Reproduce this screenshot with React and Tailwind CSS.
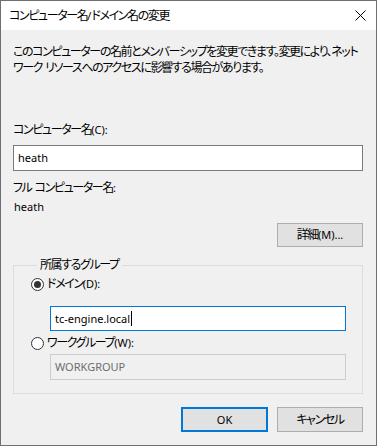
import React from "react";

const font = "font-['Noto_Sans','Noto_Sans_CJK_JP',sans-serif] [font-feature-settings:'palt']";
const en = "text-[11px]";

function J({ children }) {
  return <span className="tracking-[-1.4px]">{children}</span>;
}
function E({ children }) {
  return <span className="text-[11px] tracking-normal">{children}</span>;
}
function Sp() {
  return <span className="tracking-normal">{"\u00a0"}</span>;
}

function Radio({ checked }) {
  return (
    <span className="w-[13px] h-[13px] rounded-full border border-[#333333] bg-white flex items-center justify-center shrink-0">
      {checked && <span className="w-[7px] h-[7px] rounded-full bg-[#333333]" />}
    </span>
  );
}

export default function App() {
  return (
    <div className={`${font} w-[377px] h-[446px] border border-[#6f6f6f] bg-[#f0f0f0] flex flex-col text-[12px] text-black leading-[16px] overflow-hidden whitespace-nowrap`}>
      <div className="h-[29px] bg-white flex items-center justify-between pl-[8px] pr-[10px] shrink-0">
        <span><J>コンピューター名</J><E>/</E><J>ドメイン名の変更</J></span>
        <svg width="11" height="11" viewBox="0 0 11 11" className="block">
          <path d="M0.5 0.5 L10.5 10.5 M10.5 0.5 L0.5 10.5" stroke="#000" strokeWidth="1" fill="none" />
        </svg>
      </div>
      <div className="flex flex-col pl-[12px] pr-[13px]">
        <div className="mt-[14px] leading-[16px]">
          <div><J>このコンピューターの名前とメンバーシップを変更できます。変更により、ネット</J></div>
          <div><J>ワーク</J><Sp /><J>リソースへのアクセスに影響する場合があります。</J></div>
        </div>
        <div className="mt-[46px] h-[16px]"><J>コンピューター名</J><E>(C):</E></div>
        <div className={`mt-[7px] h-[26px] border border-[#7a7a7a] bg-white flex items-center pl-[4px] ${en}`}>heath</div>
        <div className="mt-[9px] h-[16px]"><J>フル</J><Sp /><J>コンピューター名</J><E>:</E></div>
        <div className={`mt-[3px] h-[16px] pl-[1px] ${en}`}>heath</div>
        <div className="mt-[8px] self-end w-[86px] h-[24px] border border-[#adadad] bg-[#e1e1e1] flex items-center justify-center">
          <span><J>詳細</J><E>(M)...</E></span>
        </div>
        <fieldset className="mt-[10px] border border-[#dcdcdc] pl-[17px] pb-[13px] flex flex-col">
          <legend className="ml-[6px] px-[3px] leading-[16px]"><J>所属するグループ</J></legend>
          <div className="mt-[3px] h-[16px] flex items-center gap-[3px]">
            <Radio checked />
            <span><J>ドメイン</J><E>(D):</E></span>
          </div>
          <div className={`mt-[14px] ml-[19px] w-[296px] h-[25px] border border-[#0078d7] bg-white flex items-center pl-[4px] ${en}`}>
            <span>tc-engine.local</span>
            <span className="ml-[1px] w-[1px] h-[15px] bg-black" />
          </div>
          <div className="mt-[4px] h-[16px] flex items-center gap-[3px]">
            <Radio />
            <span><J>ワークグループ</J><E>(W):</E></span>
          </div>
          <div className={`mt-[3px] ml-[19px] w-[296px] h-[26px] border border-[#cccccc] bg-[#f0f0f0] flex items-center pl-[4px] text-[#6d6d6d] ${en}`}>
            WORKGROUP
          </div>
        </fieldset>
        <div className="mt-[13px] flex justify-end gap-[9px]">
          <div className={`w-[87px] h-[25px] border-2 border-[#0078d7] bg-[#e1e1e1] flex items-center justify-center ${en}`}>OK</div>
          <div className="w-[86px] h-[25px] border border-[#adadad] bg-[#e1e1e1] flex items-center justify-center"><J>キャンセル</J></div>
        </div>
      </div>
    </div>
  );
}
